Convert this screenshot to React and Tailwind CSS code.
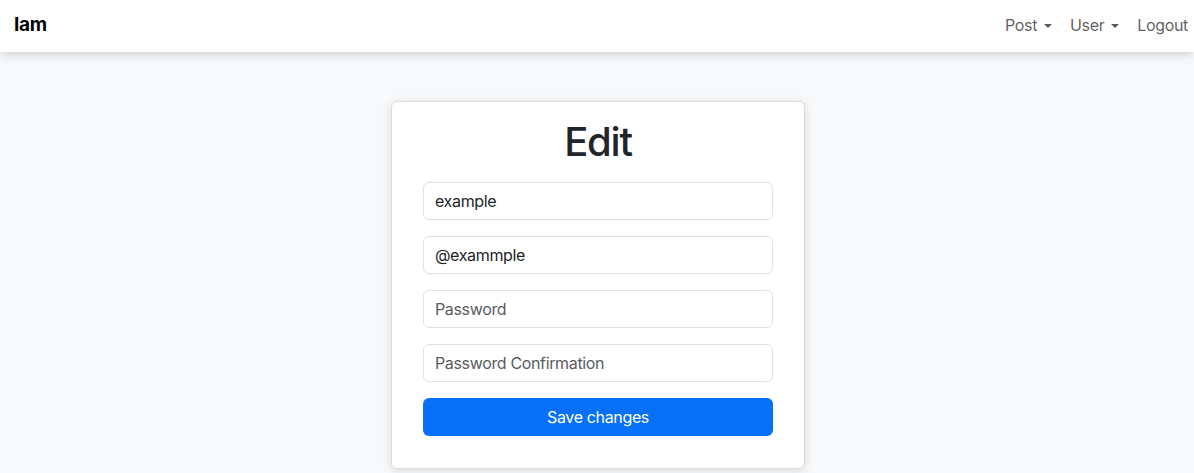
export default function App() {
  const caret = (
    <span className="ml-[7px] inline-block h-0 w-0 border-x-[4px] border-t-[4px] border-x-transparent border-t-current align-[3px]" />
  );
  return (
    <div className="min-h-[473px] bg-[#f8f9fa] font-['Inter','Liberation_Sans',sans-serif] tracking-[-0.35px] text-[#212529]">
      <nav className="relative z-10 flex h-[52px] items-center justify-between bg-white pb-[2px] pl-[14px] pr-[6px] shadow-[0_2px_10px_rgba(0,0,0,0.18)]">
        <span className="text-[19px] font-bold text-black">Iam</span>
        <div className="flex items-center text-[16px] text-[rgba(0,0,0,0.65)]">
          <span className="px-[9px]">Post{caret}</span>
          <span className="px-[9px]">User{caret}</span>
          <span className="pl-[9px]">Logout</span>
        </div>
      </nav>
      <div className="flex justify-center pl-[2px] pt-[49px]">
        <div className="w-[414px] rounded-[6px] border border-[#dcdcdc] bg-white px-[31px] pb-[32px] pt-[16px] shadow-[0_2px_10px_rgba(0,0,0,0.12)]">
          <h1 className="mb-[16px] text-center text-[40px] font-medium leading-[48px] tracking-[-0.03em]">Edit</h1>
          <div className="flex flex-col gap-[16px]">
            <input className="h-[38px] w-full rounded-[6px] border border-[#dee2e6] px-[11px] text-[16px] text-[#212529] outline-none" defaultValue="example" />
            <input className="h-[38px] w-full rounded-[6px] border border-[#dee2e6] px-[11px] text-[16px] text-[#212529] outline-none" defaultValue="@exammple" />
            <input className="h-[38px] w-full rounded-[6px] border border-[#dee2e6] px-[11px] text-[16px] outline-none placeholder:text-[#595c5f]" placeholder="Password" type="password" />
            <input className="h-[38px] w-full rounded-[6px] border border-[#dee2e6] px-[11px] text-[16px] outline-none placeholder:text-[#595c5f]" placeholder="Password Confirmation" type="password" />
            <button className="h-[38px] w-full rounded-[6px] bg-[#0670f9] text-[16px] text-white">Save changes</button>
          </div>
        </div>
      </div>
    </div>
  );
}
